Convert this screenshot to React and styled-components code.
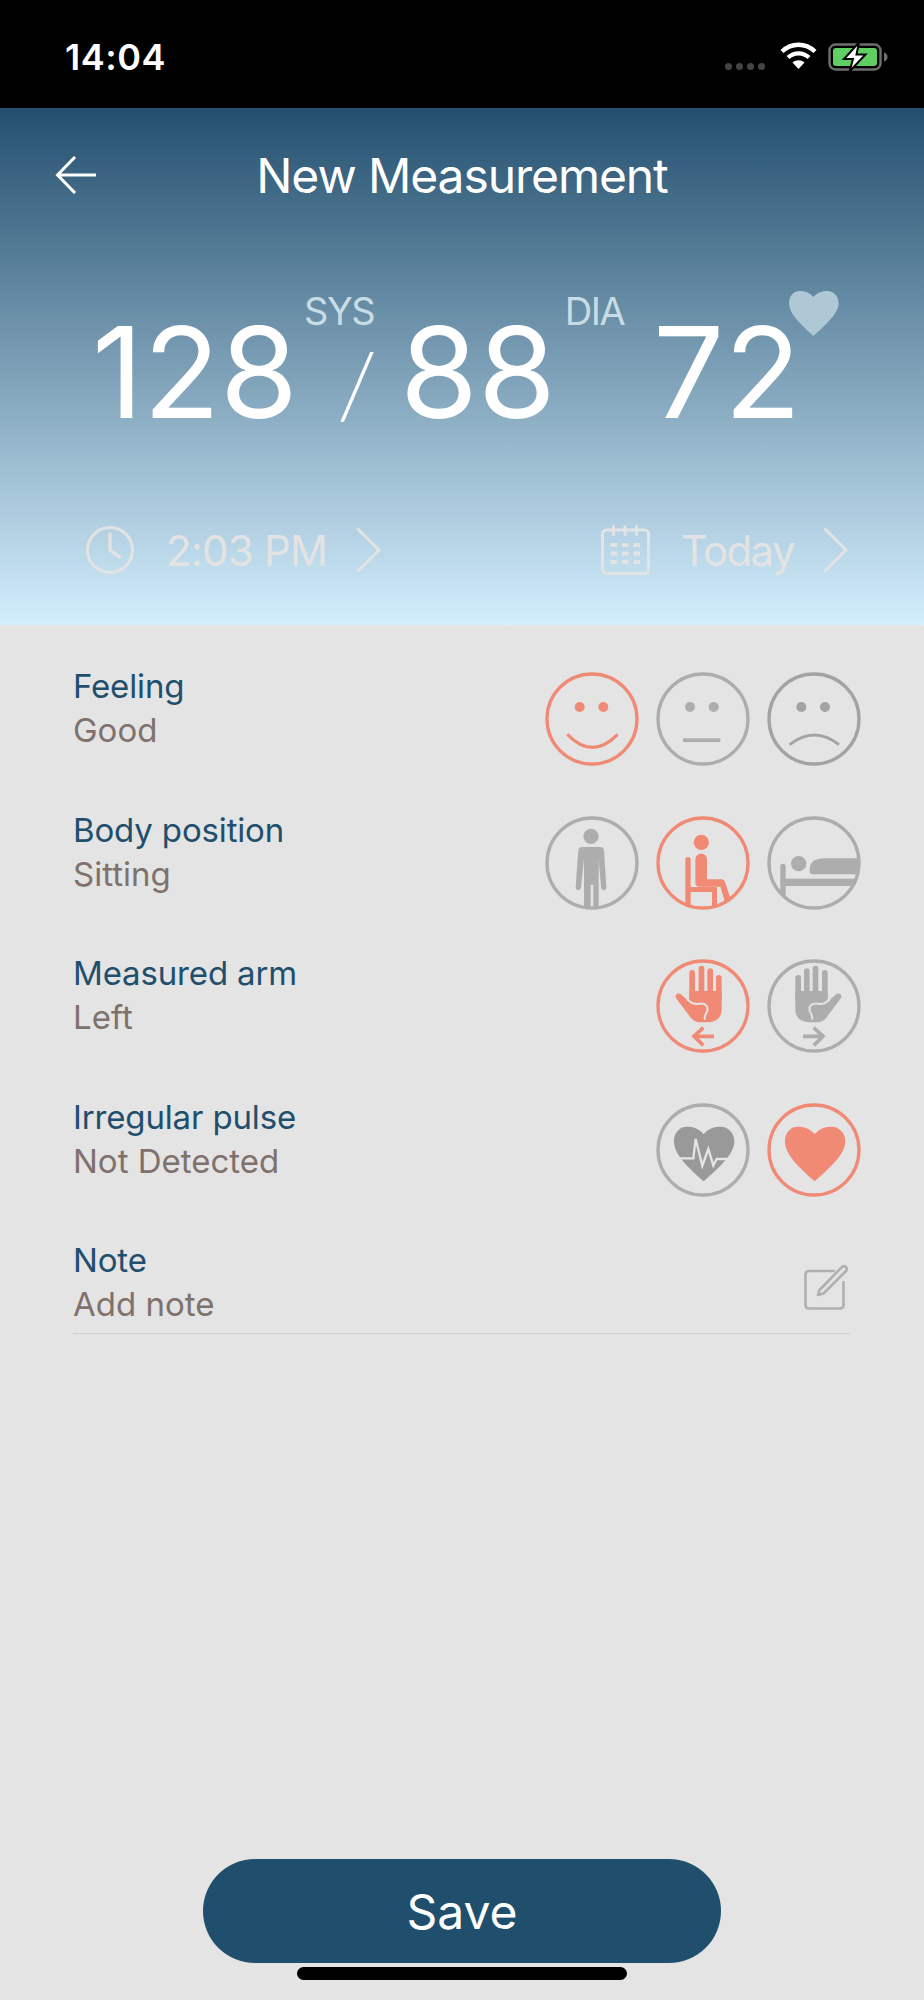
import styled, { createGlobalStyle } from "styled-components";

const CORAL = "#f08a75";
const GRAY = "#adadad";
const DARK = "#a3a3a3";
const BG = "#e4e4e4";

const GlobalStyle = createGlobalStyle`
  * { box-sizing: border-box; }
  body {
    margin: 0;
    background: ${BG};
    font-family: Inter, "Liberation Sans", sans-serif;
  }
`;

const heartPath =
  "M143 93 C128 76 110 71 92 71 C70 71 54 90 54 114 C54 146 76 176 143 235 C210 176 235 146 235 114 C235 90 216 71 194 71 C176 71 158 76 143 93 Z";

function RoundIcon({ tone, children }) {
  return (
    <IconButton $tone={tone}>
      <svg width="94" height="94" viewBox="0 0 282 282">
        <defs>
          <clipPath id="inner">
            <circle cx="141" cy="141" r="137" />
          </clipPath>
        </defs>
        <circle cx="141" cy="141" r="135" fill="none" stroke="currentColor" strokeWidth="10" />
        <g clipPath="url(#inner)">{children}</g>
      </svg>
    </IconButton>
  );
}

const Hand = () => (
  <>
    <rect x="100" y="33" width="17" height="90" rx="8.5" fill="currentColor" />
    <rect x="128" y="20" width="17" height="100" rx="8.5" fill="currentColor" />
    <rect x="154" y="28" width="17" height="90" rx="8.5" fill="currentColor" />
    <rect x="180" y="48" width="17" height="80" rx="8.5" fill="currentColor" />
    <path
      d="M100 96 H197 V150 Q197 190 150 190 H132 Q112 190 101 172 L62 120 Q55 110 63 105 Q70 101 77 108 L100 128 Z"
      fill="currentColor"
    />
    <path d="M95 122 Q112 138 130 134 Q158 132 154 156 Q146 166 146 180" fill="none" stroke={BG} strokeWidth="6" strokeLinecap="round" />
  </>
);

const Arrow = () => (
  <path d="M174 232 H114 M142 206 L114 232 L142 259" fill="none" stroke="currentColor" strokeWidth="11" />
);

export default function App() {
  return (
    <Page>
      <GlobalStyle />
      <StatusBar>
        <Clock>14:04</Clock>
        <StatusIcons>
          <SignalDots>
            <Dot />
            <Dot />
            <Dot />
            <Dot />
          </SignalDots>
          <WifiIcon width="37" height="27" viewBox="0 0 37 27">
            <path d="M2 9.5 C11.5 0.5 25.5 0.5 35 9.5" fill="none" stroke="#fff" strokeWidth="4.4" />
            <path d="M8 15.5 C14 10 23 10 29 15.5" fill="none" stroke="#fff" strokeWidth="4.2" />
            <path d="M12.5 20.5 C16 17.5 21 17.5 24.5 20.5 L18.5 27 Z" fill="#fff" />
          </WifiIcon>
          <svg width="60" height="30" viewBox="0 0 60 30">
            <rect x="1.5" y="2.5" width="51" height="25" rx="6" fill="none" stroke="#6e6e6e" strokeWidth="2.4" />
            <rect x="5" y="6" width="44" height="18" rx="3" fill="#5fcf63" />
            <path d="M56 10.5 C58.5 11.5 59.5 13 59.5 15 C59.5 17 58.5 18.5 56 19.5 Z" fill="#6e6e6e" />
            <path d="M31 0.5 L16 17 H25 L21.5 29.5 L37.5 12.5 H28.5 Z" fill="#fff" stroke="#000" strokeWidth="2" />
          </svg>
        </StatusIcons>
      </StatusBar>

      <Header>
        <NavBar>
          <BackButton>
            <svg width="41" height="38" viewBox="0 0 41 38">
              <path d="M41 19 H3 M20 1 L2.5 19 L20 37" fill="none" stroke="#fff" strokeWidth="3" />
            </svg>
          </BackButton>
          <Title>New Measurement</Title>
        </NavBar>

        <Readings>
          <Value>128</Value>
          <Slot $width={102}>
            <SmallLabel $nudge={-20}>SYS</SmallLabel>
            <Slash>/</Slash>
          </Slot>
          <Value>88</Value>
          <Slot $width={97}>
            <SmallLabel $nudge={-20}>DIA</SmallLabel>
          </Slot>
          <Value>72</Value>
          <PulseHeart>
            <svg width="52" height="47" viewBox="50 68 190 170">
              <path d={heartPath} fill="#afc8d6" />
            </svg>
          </PulseHeart>
        </Readings>

        <WhenRow>
          <WhenItem>
            <svg width="48" height="50" viewBox="0 0 48 50">
              <circle cx="24" cy="25" r="22.5" fill="none" stroke="#e3e3e3" strokeWidth="3" />
              <path d="M24 9 V25 L33.5 32" fill="none" stroke="#e3e3e3" strokeWidth="3.4" strokeLinecap="round" />
            </svg>
            <WhenText $gap={32} $after={29}>2:03 PM</WhenText>
            <Chevron />
          </WhenItem>
          <WhenItem>
            <svg width="49" height="50" viewBox="0 0 49 50">
              <rect x="1.5" y="5" width="46" height="43.5" rx="4" fill="none" stroke="#e3e3e3" strokeWidth="3" />
              <path d="M12.5 1.5 V9.5 M24 1.5 V9.5 M35.5 1.5 V9.5" stroke="#e3e3e3" strokeWidth="3" strokeLinecap="round" />
              <path
                d="M9.5 18 H16 V22 H9.5 Z M21 18 H27.5 V22 H21 Z M32.5 18 H39 V22 H32.5 Z M9.5 26.5 H16 V30.5 H9.5 Z M21 26.5 H27.5 V30.5 H21 Z M32.5 26.5 H39 V30.5 H32.5 Z M9.5 35 H16 V39 H9.5 Z M21 35 H27.5 V39 H21 Z M32.5 35 H39 V39 H32.5 Z"
                fill="#e3e3e3"
              />
            </svg>
            <WhenText $gap={31} $after={29} $tight>Today</WhenText>
            <Chevron />
          </WhenItem>
        </WhenRow>
      </Header>

      <Content>
        <Row>
          <RowText>
            <RowLabel>Feeling</RowLabel>
            <RowValue>Good</RowValue>
          </RowText>
          <Options>
            <RoundIcon tone="active">
              <circle cx="104" cy="105" r="15" fill="currentColor" />
              <circle cx="175" cy="105" r="15" fill="currentColor" />
              <path d="M67 187 Q142 265 218 187" fill="none" stroke="currentColor" strokeWidth="10" />
            </RoundIcon>
            <RoundIcon>
              <circle cx="102" cy="105" r="15" fill="currentColor" />
              <circle cx="173" cy="105" r="15" fill="currentColor" />
              <rect x="81" y="199" width="112" height="11" fill="currentColor" />
            </RoundIcon>
            <RoundIcon tone="dark">
              <circle cx="103" cy="105" r="15" fill="currentColor" />
              <circle cx="174" cy="105" r="15" fill="currentColor" />
              <path d="M68 218 Q142 160 216 218" fill="none" stroke="currentColor" strokeWidth="9" />
            </RoundIcon>
          </Options>
        </Row>

        <Row>
          <RowText>
            <RowLabel>Body position</RowLabel>
            <RowValue>Sitting</RowValue>
          </RowText>
          <Options>
            <RoundIcon>
              <circle cx="138" cy="61" r="23" fill="currentColor" />
              <path
                d="M112 93 H165 Q176 93 177 104 L184 212 Q184 222 176 222 Q169 222 168 213 L161 130 V282 H145 V206 H137 V282 H117 V130 L108 213 Q107 222 100 222 Q92 222 92 212 L100 104 Q101 93 112 93 Z"
                fill="currentColor"
              />
            </RoundIcon>
            <RoundIcon tone="active">
              <circle cx="136" cy="79" r="23" fill="currentColor" />
              <path
                d="M118 130 A17.5 17.5 0 0 1 153 130 V190 H195 Q205 190 208 200 L224 250 L207 258 L193 212 H130 Q118 212 118 200 Z"
                fill="currentColor"
              />
              <rect x="88" y="123" width="16" height="159" rx="8" fill="currentColor" />
              <path d="M96 213 H183 V275 H168 V228 H96 Z" fill="currentColor" />
            </RoundIcon>
            <RoundIcon>
              <circle cx="95" cy="143" r="23" fill="currentColor" />
              <path d="M128 175 V160 Q128 127 175 127 H282 V175 H138 Q128 175 128 165 Z" fill="currentColor" />
              <path d="M40 151 A8 8 0 0 1 56 151 V250 H40 Z" fill="currentColor" />
              <rect x="50" y="188" width="232" height="22" fill="currentColor" />
            </RoundIcon>
          </Options>
        </Row>

        <Row>
          <RowText>
            <RowLabel>Measured arm</RowLabel>
            <RowValue>Left</RowValue>
          </RowText>
          <Options>
            <RoundIcon tone="active">
              <Hand />
              <Arrow />
            </RoundIcon>
            <RoundIcon>
              <g transform="translate(282 0) scale(-1 1)">
                <Hand />
                <Arrow />
              </g>
            </RoundIcon>
          </Options>
        </Row>

        <Row>
          <RowText>
            <RowLabel>Irregular pulse</RowLabel>
            <RowValue>Not Detected</RowValue>
          </RowText>
          <Options>
            <RoundIcon>
              <path d={heartPath} fill="#999999" />
              <path
                d="M50 166 H112 L119 108 L139 188 L157 138 L172 188 L182 168 H240"
                fill="none"
                stroke={BG}
                strokeWidth="7"
              />
            </RoundIcon>
            <RoundIcon tone="active">
              <path d={heartPath} fill="currentColor" />
            </RoundIcon>
          </Options>
        </Row>

        <NoteRow>
          <RowText>
            <RowLabel>Note</RowLabel>
            <RowValue>Add note</RowValue>
          </RowText>
          <svg width="44" height="46" viewBox="0 0 44 46">
            <path
              d="M31 7 H5 Q1.5 7 1.5 10.5 V41 Q1.5 44.5 5 44.5 H36 Q39.5 44.5 39.5 41 V17"
              fill="none"
              stroke="#b0b0b0"
              strokeWidth="2.6"
            />
            <path
              d="M14 31 L15.5 26 L38 3 Q40 1.2 42 3 Q43.5 5 42 7 L19.5 29.5 Z"
              fill="none"
              stroke="#b0b0b0"
              strokeWidth="2.6"
              strokeLinejoin="round"
            />
          </svg>
        </NoteRow>
      </Content>

      <Footer>
        <SaveButton>Save</SaveButton>
        <HomeIndicator />
      </Footer>
    </Page>
  );
}

function Chevron() {
  return (
    <svg width="25" height="46" viewBox="0 0 25 46">
      <path d="M1.5 1.5 L23 23 L1.5 44.5" fill="none" stroke="#e3e3e3" strokeWidth="3" />
    </svg>
  );
}

const Page = styled.div`
  width: 924px;
  height: 2000px;
  display: flex;
  flex-direction: column;
  background: ${BG};
  overflow: hidden;
`;

const StatusBar = styled.div`
  height: 108px;
  flex: none;
  background: #000;
  display: flex;
  justify-content: space-between;
  align-items: flex-start;
  padding: 34px 36px 0 65px;
`;
const Clock = styled.div`
  color: #fff;
  font-size: 36px;
  line-height: 46px;
  font-weight: 600;
  letter-spacing: 0.5px;
`;
const StatusIcons = styled.div`
  display: flex;
  align-items: flex-start;
  padding-top: 8px;
`;
const SignalDots = styled.div`
  display: flex;
  gap: 4px;
  margin: 21px 15px 0 0;
`;
const Dot = styled.span`
  width: 7px;
  height: 7px;
  border-radius: 50%;
  background: #444;
`;
const WifiIcon = styled.svg`
  margin-right: 11px;
`;

const Header = styled.header`
  height: 517px;
  flex: none;
  background: linear-gradient(180deg, #24506f 0%, #d3eefd 100%);
  display: flex;
  flex-direction: column;
`;
const NavBar = styled.div`
  height: 60px;
  margin-top: 37px;
  display: flex;
  align-items: center;
  justify-content: center;
  position: relative;
`;
const BackButton = styled.div`
  position: absolute;
  left: 55px;
  top: 11px;
  line-height: 0;
`;
const Title = styled.h1`
  margin: 0;
  color: #fff;
  font-size: 48px;
  font-weight: 400;
  letter-spacing: -1.1px;
`;

const Readings = styled.div`
  display: flex;
  align-items: flex-start;
  margin-top: 102px;
  padding-left: 92px;
  height: 130px;
`;
const Value = styled.div`
  color: #fff;
  font-size: 126px;
  line-height: 130px;
  font-weight: 400;
`;
const Slot = styled.div`
  width: ${(p) => p.$width}px;
  display: flex;
  flex-direction: column;
  align-items: center;
`;
const SmallLabel = styled.div`
  color: #c9dbe5;
  font-size: 38px;
  line-height: 40px;
  letter-spacing: -1.5px;
  margin-left: ${(p) => p.$nudge || 0}px;
  margin-top: -16px;
`;
const Slash = styled.div`
  color: #fff;
  font-size: 80px;
  line-height: 90px;
  font-weight: 200;
  margin: 8px 0 0 17px;
  transform: skewX(-9deg);
`;
const PulseHeart = styled.div`
  margin: -17px 0 0 -13px;
  line-height: 0;
`;

const WhenRow = styled.div`
  display: flex;
  justify-content: space-between;
  margin-top: 88px;
  padding: 0 76px 0 86px;
`;
const WhenItem = styled.div`
  display: flex;
  align-items: center;
  height: 50px;
`;
const WhenText = styled.span`
  color: #e3e3e3;
  font-size: 42px;
  font-weight: 400;
  letter-spacing: ${(p) => (p.$tight ? "-1.6px" : "-0.8px")};
  margin: 0 ${(p) => p.$after}px 0 ${(p) => p.$gap}px;
`;

const Content = styled.main`
  display: flex;
  flex-direction: column;
  gap: 49.5px;
  padding: 47px 63px 0 73px;
`;
const Row = styled.div`
  height: 94px;
  display: flex;
  justify-content: space-between;
  align-items: center;
`;
const NoteRow = styled(Row)`
  margin-right: 11px;
  height: 88px;
  border-bottom: 1px solid #cfcfcf;
  svg {
    margin: 0 2px 5px 0;
  }
`;
const RowText = styled.div`
  align-self: flex-start;
  margin-top: -8px;
  display: flex;
  flex-direction: column;
`;
const RowLabel = styled.div`
  color: #1f4f6d;
  font-size: 33px;
  line-height: 44px;
  letter-spacing: -0.15px;
`;
const RowValue = styled.div`
  color: #7f716b;
  font-size: 33px;
  line-height: 44px;
`;
const Options = styled.div`
  display: flex;
  gap: 17px;
`;
const IconButton = styled.div`
  width: 94px;
  height: 94px;
  line-height: 0;
  color: ${(p) => (p.$tone === "active" ? CORAL : p.$tone === "dark" ? DARK : GRAY)};
`;

const Footer = styled.footer`
  margin-top: auto;
  padding-bottom: 20px;
  display: flex;
  flex-direction: column;
  align-items: center;
  gap: 4px;
`;
const SaveButton = styled.div`
  width: 518px;
  height: 104px;
  border-radius: 52px;
  background: #1f4f6d;
  color: #fff;
  font-size: 48px;
  display: flex;
  align-items: center;
  justify-content: center;
`;
const HomeIndicator = styled.div`
  width: 330px;
  height: 13px;
  border-radius: 7px;
  background: #000;
`;
